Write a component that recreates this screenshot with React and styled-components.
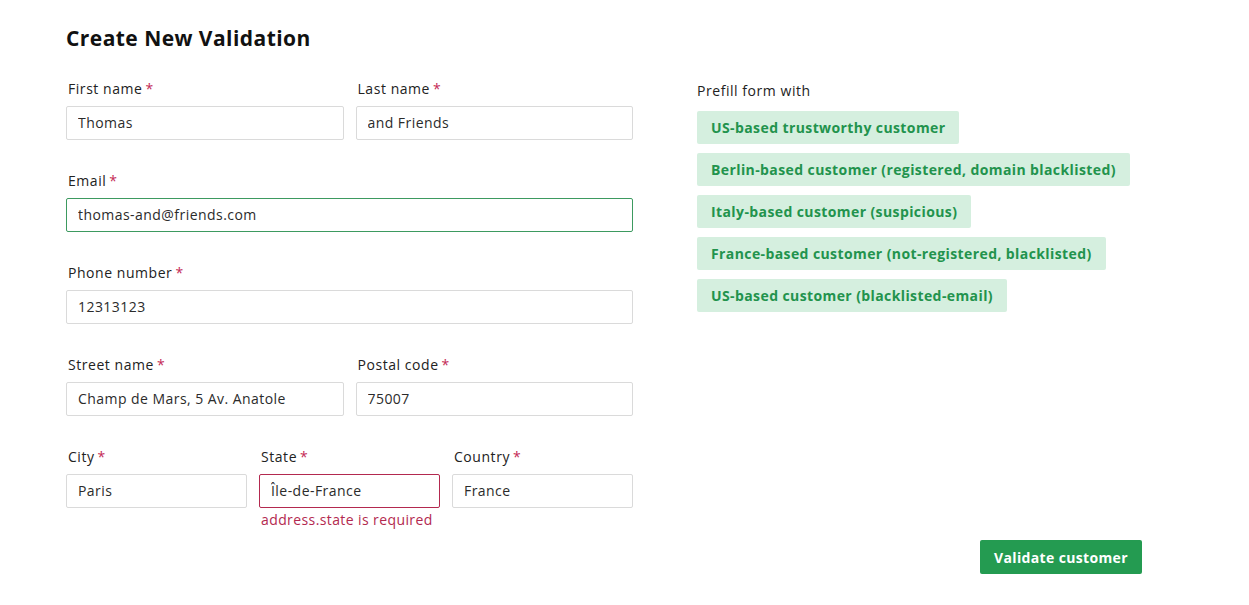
import React from "react";
import styled, { createGlobalStyle } from "styled-components";

const Global = createGlobalStyle`
  html, body { margin: 0; padding: 0; background: #ffffff; }
  body { font-family: "Open Sans", "Noto Sans", sans-serif; color: #1f1f1f; }
  * { box-sizing: border-box; }
`;

const Page = styled.div`
  width: 1076px;
  margin-left: 66px;
  padding-top: 25px;
  padding-bottom: 31px;
`;

const Title = styled.h1`
  margin: 0 0 28px 0;
  font-size: 21px;
  line-height: 26px;
  font-weight: 700;
  letter-spacing: 0.45px;
  color: #111;
`;

const Columns = styled.div`
  display: grid;
  grid-template-columns: 567px 445px;
  column-gap: 64px;
  align-items: start;
`;

const Form = styled.div`
  display: flex;
  flex-direction: column;
  gap: 31px;
`;

const Row = styled.div`
  display: grid;
  grid-template-columns: repeat(${(p) => p.$cols}, 1fr);
  column-gap: 12px;
`;

const Field = styled.div`
  display: flex;
  flex-direction: column;
`;

const Label = styled.label`
  font-size: 14px;
  line-height: 20px;
  padding-left: 2px;
  margin-bottom: 7px;
  letter-spacing: 0.55px;
  color: #222;
`;

const Star = styled.span`
  color: #c42a55;
  margin-left: 3px;
`;

const Input = styled.input`
  height: 34px;
  width: 100%;
  border: 1px solid ${(p) => (p.$state === "focus" ? "#3d9a60" : p.$state === "error" ? "#b3294f" : "#dadada")};
  border-radius: 2px;
  padding: 0 11px 2px 11px;
  font-family: inherit;
  font-size: 14px;
  letter-spacing: 0.45px;
  color: #2b2b2b;
  background: #fff;
  outline: none;
`;

const ErrorText = styled.div`
  margin-top: 2px;
  font-size: 14px;
  line-height: 20px;
  letter-spacing: 0.4px;
  color: #b3294f;
  padding-left: 2px;
`;

const Side = styled.div`
  display: flex;
  flex-direction: column;
  align-items: flex-start;
  gap: 9px;
  padding-top: 2px;
`;

const SideLabel = styled.div`
  font-size: 14px;
  line-height: 20px;
  letter-spacing: 0.55px;
  color: #222;
  margin-bottom: 1px;
`;

const Chip = styled.button`
  height: 33px;
  padding: 0 14px;
  border: none;
  border-radius: 2px;
  background: #d5efdf;
  color: #22934d;
  font-family: inherit;
  font-weight: 700;
  font-size: 14px;
  letter-spacing: 0.4px;
  cursor: pointer;
`;

const Footer = styled.div`
  display: flex;
  justify-content: flex-end;
  margin-top: 10px;
`;

const Primary = styled.button`
  height: 34px;
  width: 162px;
  border: none;
  border-radius: 2px;
  background: #249b51;
  color: #fff;
  font-family: inherit;
  font-weight: 700;
  font-size: 14px;
  letter-spacing: 0.35px;
  cursor: pointer;
`;

function F({ label, value, state, error }) {
  return (
    <Field>
      <Label>
        {label}
        <Star>*</Star>
      </Label>
      <Input defaultValue={value} $state={state} />
      {error && <ErrorText>{error}</ErrorText>}
    </Field>
  );
}

const presets = [
  "US-based trustworthy customer",
  "Berlin-based customer (registered, domain blacklisted)",
  "Italy-based customer (suspicious)",
  "France-based customer (not-registered, blacklisted)",
  "US-based customer (blacklisted-email)",
];

export default function App() {
  return (
    <>
      <Global />
      <Page>
        <Title>Create New Validation</Title>
        <Columns>
          <Form>
            <Row $cols={2}>
              <F label="First name" value="Thomas" />
              <F label="Last name" value="and Friends" />
            </Row>
            <Row $cols={1}>
              <F label="Email" value="thomas-and@friends.com" state="focus" />
            </Row>
            <Row $cols={1}>
              <F label="Phone number" value="12313123" />
            </Row>
            <Row $cols={2}>
              <F label="Street name" value="Champ de Mars, 5 Av. Anatole" />
              <F label="Postal code" value="75007" />
            </Row>
            <Row $cols={3}>
              <F label="City" value="Paris" />
              <F label="State" value="Île-de-France" state="error" error="address.state is required" />
              <F label="Country" value="France" />
            </Row>
          </Form>
          <Side>
            <SideLabel>Prefill form with</SideLabel>
            {presets.map((p) => (
              <Chip key={p}>{p}</Chip>
            ))}
          </Side>
        </Columns>
        <Footer>
          <Primary>Validate customer</Primary>
        </Footer>
      </Page>
    </>
  );
}
